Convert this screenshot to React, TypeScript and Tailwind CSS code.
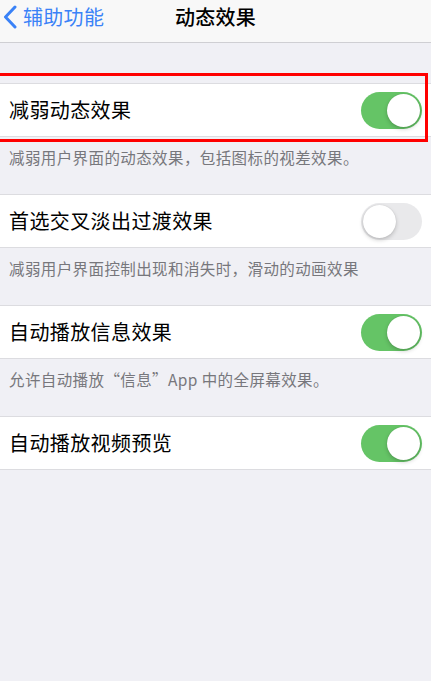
import React, { useState } from 'react';

const font = { fontFamily: '"Noto Sans CJK SC", "Noto Sans", sans-serif' };

const Toggle: React.FC<{ on: boolean; onChange: () => void }> = ({ on, onChange }) => (
  <button
    onClick={onChange}
    className={`relative w-[61px] h-[37px] rounded-full shrink-0 transition-colors ${
      on ? 'bg-[#65c466]' : 'bg-[#e9e9eb]'
    }`}
  >
    <span
      className={`absolute top-[2px] w-[33px] h-[33px] rounded-full bg-white shadow-[0_2px_4px_rgba(0,0,0,0.2),0_0_1px_rgba(0,0,0,0.15)] transition-all ${
        on ? 'left-[26px]' : 'left-[2px]'
      }`}
    />
  </button>
);

type Item = { id: string; label: string; desc?: string; highlight?: boolean };

const items: Item[] = [
  { id: 'reduce', label: '减弱动态效果', desc: '减弱用户界面的动态效果，包括图标的视差效果。', highlight: true },
  { id: 'crossfade', label: '首选交叉淡出过渡效果', desc: '减弱用户界面控制出现和消失时，滑动的动画效果' },
  { id: 'messages', label: '自动播放信息效果', desc: '允许自动播放“信息”App 中的全屏幕效果。' },
  { id: 'video', label: '自动播放视频预览' },
];

export default function App() {
  const [state, setState] = useState<Record<string, boolean>>({
    reduce: true,
    crossfade: false,
    messages: true,
    video: true,
  });

  return (
    <div className="min-h-screen bg-[#f0f0f5] overflow-hidden" style={font}>
      <div className="h-[43px] bg-[#f8f8f8] border-b border-[#cfcfd3] relative flex items-start pt-[3px]">
        <div className="flex items-center gap-[6px] pl-[3px] text-[#3a82f7]">
          <svg width="14" height="24" viewBox="0 0 14 24" fill="none">
            <path d="M12 2L2.5 12L12 22" stroke="currentColor" strokeWidth="3" strokeLinecap="round" strokeLinejoin="round" />
          </svg>
          <span className="text-[20px] leading-[28px] tracking-[0.3px]">辅助功能</span>
        </div>
        <span className="absolute left-0 right-0 top-[3px] text-center text-[20px] leading-[28px] font-medium tracking-[0.3px] text-black">
          动态效果
        </span>
      </div>

      <div className="pt-[40px]">
        {items.map((item) => (
          <div key={item.id}>
            <div className="relative bg-white border-y border-[#dcdce0] h-[54px] flex items-center justify-between pl-[9px] pr-[9px]">
              <span className="text-[20px] text-black leading-none tracking-[0.4px]">{item.label}</span>
              <Toggle
                on={state[item.id]}
                onChange={() => setState((s) => ({ ...s, [item.id]: !s[item.id] }))}
              />
              {item.highlight && (
                <div className="absolute -top-[11px] -bottom-[6px] -left-[4px] right-[3px] border-[3px] border-[#ff0000] pointer-events-none" />
              )}
            </div>
            {item.desc && (
              <div className="h-[57px] pt-[10px] pl-[9px] text-[15.5px] leading-[20px] tracking-[0.4px] text-[#77777c]">
                {item.desc}
              </div>
            )}
          </div>
        ))}
      </div>
    </div>
  );
}
